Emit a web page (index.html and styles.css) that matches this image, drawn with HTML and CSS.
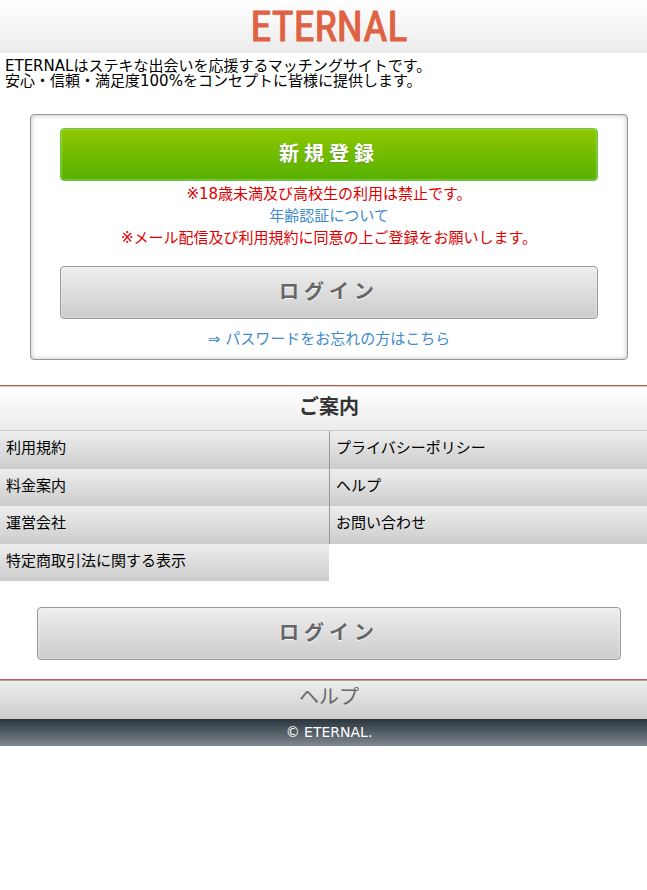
FILE: index.html
```
<!DOCTYPE html>
<html lang="ja">
<head>
    <meta charset="UTF-8">
    <meta name="viewport" content="width=device-width, initial-scale=1.0">
    <title>ETERNAL</title>
    <link rel="stylesheet" href="styles.css">
</head>
<body>
    <div class="page">
        <header>
            <h1>ETERNAL</h1>
        </header>
        <p class="intro">ETERNALはステキな出会いを応援するマッチングサイトです。<br>安心・信頼・満足度100%をコンセプトに皆様に提供します。</p>
        <div class="entry">
            <button type="button" class="btn btn-regist">新規登録</button>
            <div class="notice">
                <p>※18歳未満及び高校生の利用は禁止です。</p>
                <p><a href="#">年齢認証について</a></p>
                <p>※メール配信及び利用規約に同意の上ご登録をお願いします。</p>
            </div>
            <button type="button" class="btn">ログイン</button>
            <p class="forget"><a href="#">⇒ パスワードをお忘れの方はこちら</a></p>
        </div>
        <h2>ご案内</h2>
        <ul class="guide">
            <li><a href="#">利用規約</a></li>
            <li><a href="#">プライバシーポリシー</a></li>
            <li><a href="#">料金案内</a></li>
            <li><a href="#">ヘルプ</a></li>
            <li><a href="#">運営会社</a></li>
            <li><a href="#">お問い合わせ</a></li>
            <li><a href="#">特定商取引法に関する表示</a></li>
        </ul>
        <div class="login">
            <button type="button" class="btn">ログイン</button>
        </div>
        <footer>
            <a href="#" class="help">ヘルプ</a>
            <p class="copyright">© ETERNAL.</p>
        </footer>
    </div>
</body>
</html>
```
FILE: styles.css
```
* {
    box-sizing: border-box;
}
html {
    overflow-x: hidden;
}
body {
    margin: 0;
    background-color: #fff;
    color: #000;
    font-family: "DejaVu Sans", "Noto Sans CJK JP", sans-serif;
    font-size: 15px;
    overflow-x: hidden;
}
p, h1, h2, ul {
    margin: 0;
    padding: 0;
}
a {
    color: #428bca;
    text-decoration: none;
}
/* 画面幅より少し広い */
.page {
    margin-right: -11px;
}
header {
    height: 53px;
    background: linear-gradient(#fff, #ebebeb);
    text-align: center;
}
h1 {
    color: #e06244;
    font-family: "Roboto Condensed", "Open Sans Condensed", "DejaVu Sans Condensed", sans-serif;
    font-size: 42px;
    font-weight: normal;
    line-height: 54px;
    -webkit-text-stroke: 1px #e06244;
}
.intro {
    padding: 6px 5px 0;
    line-height: 15px;
}
.entry {
    margin: 25px 30px;
    padding: 13px 29px 9px;
    border: 1px solid #999;
    border-radius: 4px;
    box-shadow: inset 0 0 5px #bbb;
    text-align: center;
}
.btn {
    display: block;
    width: 100%;
    height: 53px;
    padding: 0 0 4px;
    border: 1px solid #999;
    border-radius: 4px;
    background: linear-gradient(#eee, #ccc);
    box-shadow: inset 0 0 2px #fff;
    color: #666;
    font-family: inherit;
    font-size: 20px;
    font-weight: bold;
    letter-spacing: 5px;
    text-shadow: 0 1px 1px #fff;
    cursor: pointer;
}
.btn-regist {
    border-color: #6cc24a;
    background: linear-gradient(#8fc800, #56b000);
    box-shadow: inset 0 0 2px #cf9;
    color: #fff;
    text-shadow: 0 1px 2px #693;
}
.notice {
    padding: 2px 0 17px;
    color: #d00;
    line-height: 22px;
}
.forget {
    padding-top: 9px;
    line-height: 22px;
}
h2 {
    height: 46px;
    border-top: 1px solid #c0604c;
    border-bottom: 1px solid #ccc;
    background: linear-gradient(#fff, #ebebeb);
    box-shadow: inset 0 1px #dcc8c0;
    color: #333;
    font-size: 20px;
    line-height: 42px;
    text-align: center;
}
.guide {
    display: grid;
    grid-template-columns: 1fr 1fr;
    grid-auto-rows: 1fr;
    min-height: 150px;
    list-style: none;
}
.guide a {
    display: block;
    height: 100%;
    padding: 0 6px;
    background: linear-gradient(#eee, #ccc);
    color: #000;
    line-height: 35px;
}
.guide li:nth-child(even) a {
    border-left: 1px solid #999;
}
.login {
    padding: 26px 37px 19px;
}
.help {
    display: block;
    height: 40px;
    border-top: 1px solid #c0604c;
    background: linear-gradient(#eee, #ccc);
    box-shadow: inset 0 1px #b0a09c;
    color: #666;
    font-size: 20px;
    line-height: 35px;
    text-align: center;
}
.copyright {
    height: 27px;
    background: linear-gradient(#29343d, #808890);
    color: #fff;
    font-size: 14px;
    line-height: 27px;
    text-align: center;
}
```
